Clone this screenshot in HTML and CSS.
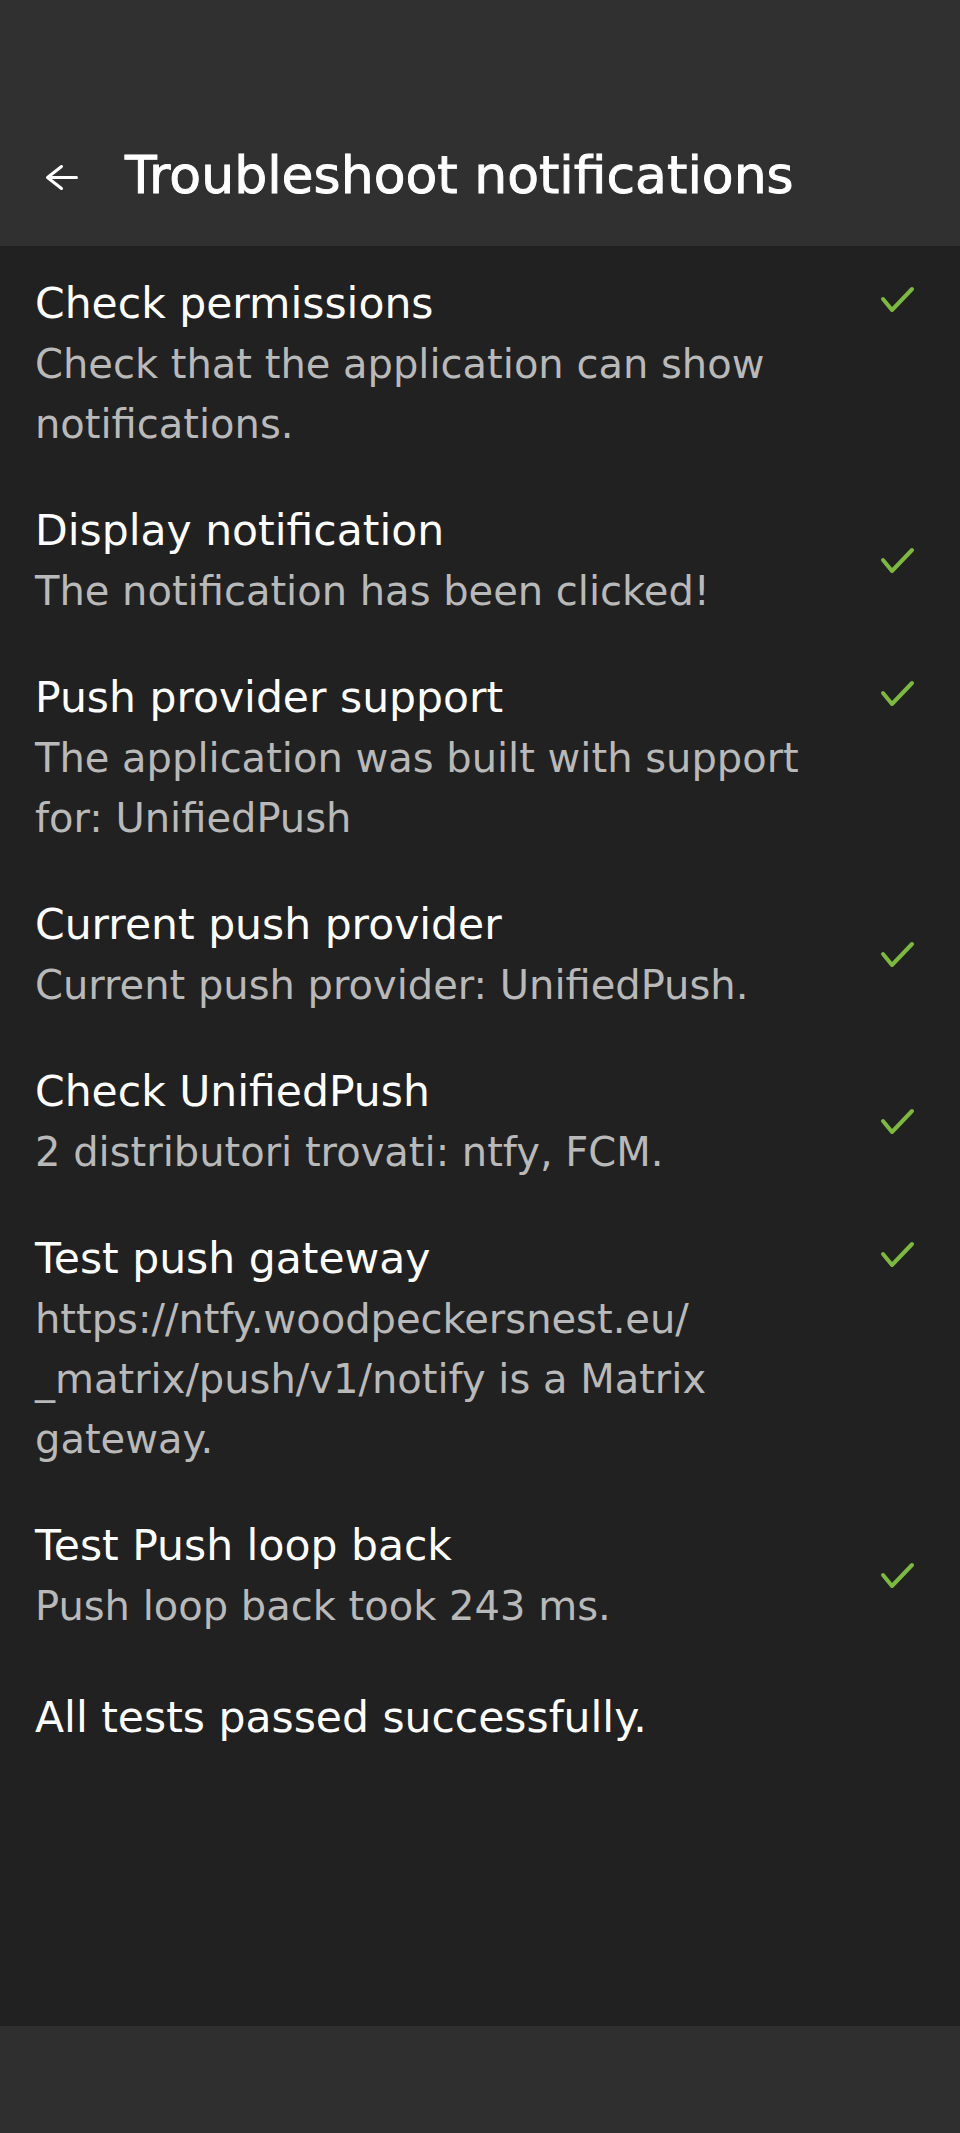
FILE: index.html
```html
<!DOCTYPE html>
<html lang="en">
<head>
<meta charset="utf-8">
<title>Troubleshoot notifications</title>
<link rel="stylesheet" href="styles.css">
</head>
<body>
<header class="appbar">
  <div class="toolbar">
    <svg class="back" width="40" height="34" viewBox="0 0 40 34" aria-hidden="true">
      <path d="M34.5 19.5H5.5M19.5 8.5L5.5 19.5L19.5 30.5" fill="none" stroke="currentColor" stroke-width="3" stroke-linecap="round" stroke-linejoin="round"/>
    </svg>
    <h1 class="title">Troubleshoot notifications</h1>
  </div>
</header>
<main class="content">
  <ul class="tests">
    <li class="test test--multi">
      <div class="test-text">
        <div class="test-title">Check permissions</div>
        <div class="test-desc">Check that the application can show notifications.</div>
      </div>
      <svg class="check" width="36" height="28" viewBox="0 0 36 28" aria-hidden="true"><polyline points="3,13 12,24 32,3" fill="none" stroke="currentColor" stroke-width="4" stroke-linecap="round" stroke-linejoin="round"/></svg>
    </li>
    <li class="test">
      <div class="test-text">
        <div class="test-title">Display notification</div>
        <div class="test-desc">The notification has been clicked!</div>
      </div>
      <svg class="check" width="36" height="28" viewBox="0 0 36 28" aria-hidden="true"><polyline points="3,13 12,24 32,3" fill="none" stroke="currentColor" stroke-width="4" stroke-linecap="round" stroke-linejoin="round"/></svg>
    </li>
    <li class="test test--multi">
      <div class="test-text">
        <div class="test-title">Push provider support</div>
        <div class="test-desc">The application was built with support for: UnifiedPush</div>
      </div>
      <svg class="check" width="36" height="28" viewBox="0 0 36 28" aria-hidden="true"><polyline points="3,13 12,24 32,3" fill="none" stroke="currentColor" stroke-width="4" stroke-linecap="round" stroke-linejoin="round"/></svg>
    </li>
    <li class="test">
      <div class="test-text">
        <div class="test-title">Current push provider</div>
        <div class="test-desc">Current push provider: UnifiedPush.</div>
      </div>
      <svg class="check" width="36" height="28" viewBox="0 0 36 28" aria-hidden="true"><polyline points="3,13 12,24 32,3" fill="none" stroke="currentColor" stroke-width="4" stroke-linecap="round" stroke-linejoin="round"/></svg>
    </li>
    <li class="test">
      <div class="test-text">
        <div class="test-title">Check UnifiedPush</div>
        <div class="test-desc">2 distributori trovati: ntfy, FCM.</div>
      </div>
      <svg class="check" width="36" height="28" viewBox="0 0 36 28" aria-hidden="true"><polyline points="3,13 12,24 32,3" fill="none" stroke="currentColor" stroke-width="4" stroke-linecap="round" stroke-linejoin="round"/></svg>
    </li>
    <li class="test test--multi">
      <div class="test-text">
        <div class="test-title">Test push gateway</div>
        <div class="test-desc">https://ntfy.woodpeckersnest.eu/<wbr>_matrix/push/v1/notify is a Matrix gateway.</div>
      </div>
      <svg class="check" width="36" height="28" viewBox="0 0 36 28" aria-hidden="true"><polyline points="3,13 12,24 32,3" fill="none" stroke="currentColor" stroke-width="4" stroke-linecap="round" stroke-linejoin="round"/></svg>
    </li>
    <li class="test">
      <div class="test-text">
        <div class="test-title">Test Push loop back</div>
        <div class="test-desc">Push loop back took 243 ms.</div>
      </div>
      <svg class="check" width="36" height="28" viewBox="0 0 36 28" aria-hidden="true"><polyline points="3,13 12,24 32,3" fill="none" stroke="currentColor" stroke-width="4" stroke-linecap="round" stroke-linejoin="round"/></svg>
    </li>
  </ul>
  <p class="summary">All tests passed successfully.</p>
</main>
<footer class="navbar"></footer>
</body>
</html>
```
FILE: styles.css
```css
html, body {
  margin: 0;
  padding: 0;
}

body {
  min-height: 100vh;
  display: flex;
  flex-direction: column;
  background: #212121;
  color: #ffffff;
  font-family: "DejaVu Sans", "Liberation Sans", sans-serif;
}

.appbar {
  box-sizing: border-box;
  height: 246px;
  padding-top: 104px;
  background: #303030;
  flex-shrink: 0;
}

.toolbar {
  height: 142px;
  display: flex;
  align-items: center;
}

.back {
  flex-shrink: 0;
  margin-left: 42px;
  margin-right: 43px;
  color: #ffffff;
}

.title {
  margin: 0;
  font-size: 52px;
  line-height: 1;
  font-weight: normal;
  color: #ffffff;
  -webkit-text-stroke: 0.9px #ffffff;
  white-space: nowrap;
}

.content {
  flex: 1;
}

.tests {
  list-style: none;
  margin: 0;
  padding: 4px 44px 0 35px;
}

.test {
  display: flex;
  align-items: center;
  gap: 24px;
  padding: 23px 0;
}

.test-text {
  flex: 1;
  min-width: 0;
}

.test-title {
  font-size: 42.5px;
  line-height: 61px;
  color: #ffffff;
}

.test-desc {
  font-size: 40px;
  line-height: 60px;
  color: #b9b9b9;
}

.check {
  flex-shrink: 0;
  color: #7cba3e;
}

.test--multi .check {
  align-self: flex-start;
  margin-top: 13px;
}

.summary {
  margin: 0;
  padding: 28px 35px 0;
  font-size: 42.5px;
  line-height: 61px;
  color: #ffffff;
}

.navbar {
  height: 107px;
  background: #2f2f2f;
  flex-shrink: 0;
}
```
